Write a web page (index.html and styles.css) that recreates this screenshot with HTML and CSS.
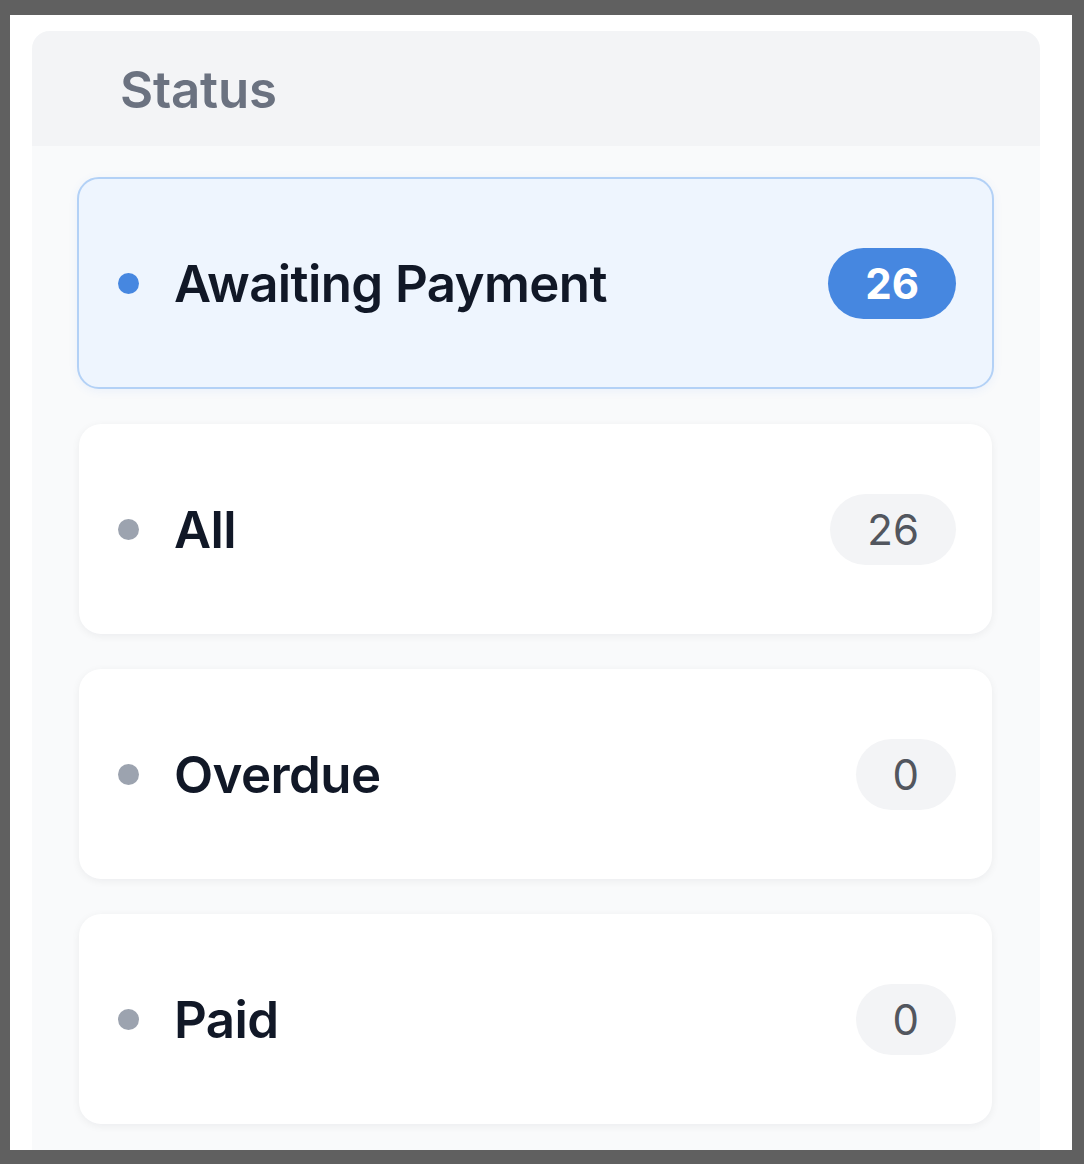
FILE: index.html
```html
<!DOCTYPE html>
<html lang="en">
<head>
<meta charset="utf-8">
<title>Status</title>
<link rel="stylesheet" href="styles.css">
</head>
<body>
<div class="frame">
  <section class="panel">
    <header class="panel-head">Status</header>
    <div class="panel-body">
      <div class="card card-active">
        <span class="dot dot-blue"></span>
        <span class="label">Awaiting Payment</span>
        <span class="badge badge-blue">26</span>
      </div>
      <div class="card">
        <span class="dot"></span>
        <span class="label">All</span>
        <span class="badge">26</span>
      </div>
      <div class="card">
        <span class="dot"></span>
        <span class="label">Overdue</span>
        <span class="badge">0</span>
      </div>
      <div class="card">
        <span class="dot"></span>
        <span class="label">Paid</span>
        <span class="badge">0</span>
      </div>
    </div>
  </section>
</div>
</body>
</html>
```
FILE: styles.css
```css
* { box-sizing: border-box; }
html, body { margin: 0; }
body {
  background: #606060;
  padding: 15px 12px 14px 10px;
  font-family: Inter, "Noto Sans", sans-serif;
}
.frame {
  background: #ffffff;
  height: 1135px;
  overflow: hidden;
  padding: 16px 32px 0 22px;
}
.panel {
  background: #f9fafb;
  border-radius: 18px 18px 0 0;
  height: 1200px;
}
.panel-head {
  background: #f3f4f6;
  border-radius: 18px 18px 0 0;
  height: 115px;
  display: flex;
  align-items: center;
  padding-left: 88px;
  padding-top: 1px;
  font-size: 51px;
  font-weight: 600;
  color: #6b7280;
  letter-spacing: -0.2px;
}
.panel-body {
  display: flex;
  flex-direction: column;
  gap: 35px;
  padding: 31px 48px 0 47px;
}
.card {
  height: 210px;
  background: #ffffff;
  border-radius: 22px;
  display: flex;
  align-items: center;
  padding: 0 36px 0 39px;
  box-shadow: 0 2px 8px rgba(17, 24, 39, 0.06);
}
.card-active {
  height: 212px;
  margin: 0 -2px;
  background: #eef5fe;
  border: 2px solid #b3d1f6;
  padding: 0 36px 0 39px;
  box-shadow: 0 2px 10px rgba(59, 130, 246, 0.08);
}
.dot {
  width: 21px;
  height: 21px;
  border-radius: 50%;
  background: #9ca3af;
  flex: none;
}
.dot-blue { background: #4687e0; }
.label {
  margin-left: 35px;
  flex: 1;
  font-size: 51px;
  font-weight: 600;
  color: #111827;
  letter-spacing: -0.6px;
}
.badge {
  height: 71px;
  padding: 0 37px;
  border-radius: 36px;
  background: #f3f4f6;
  color: #52565e;
  font-size: 42px;
  font-weight: 400;
  display: flex;
  align-items: center;
}
.badge-blue {
  background: #4687e0;
  color: #ffffff;
  font-weight: 700;
}
```
